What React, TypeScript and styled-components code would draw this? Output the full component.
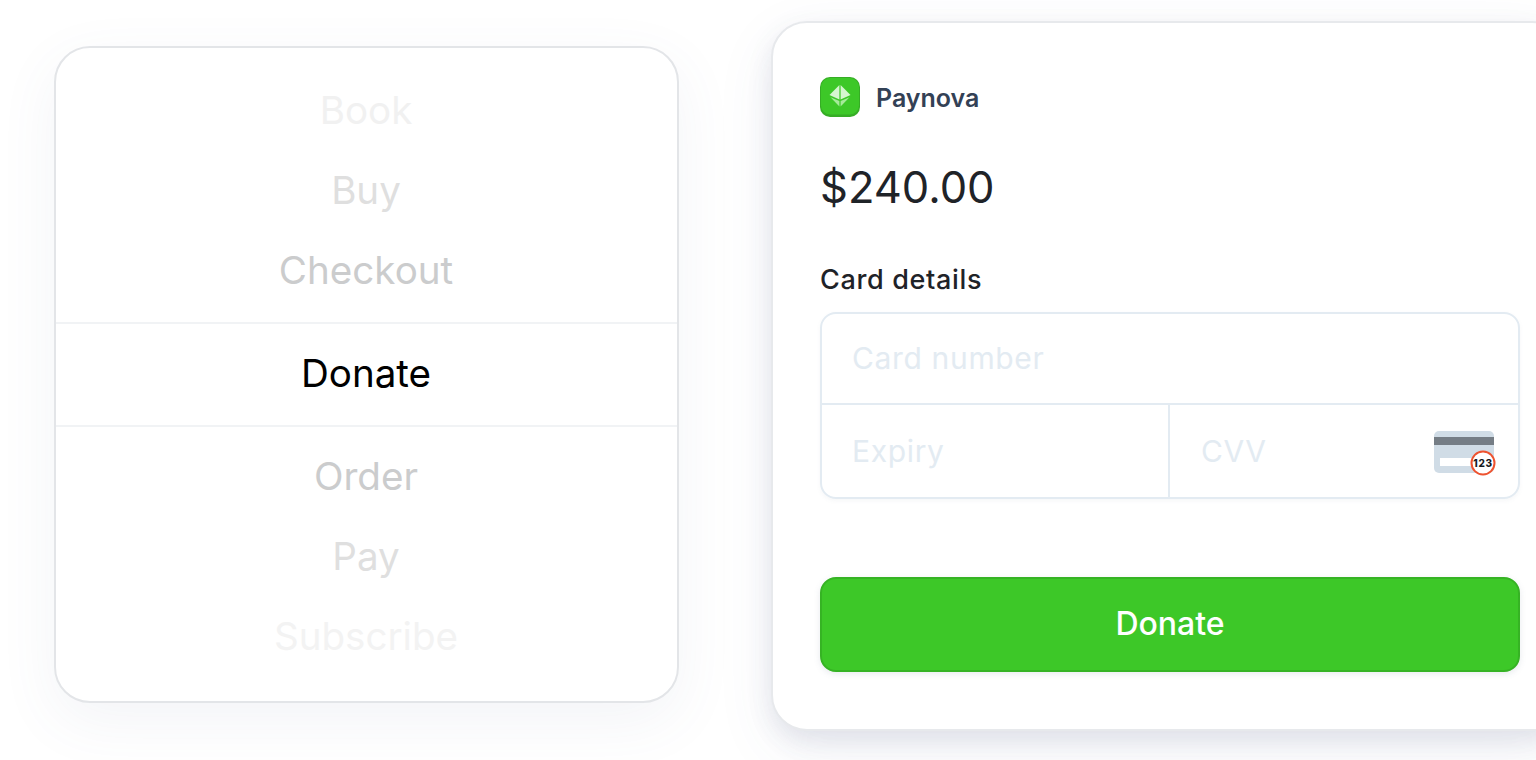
import React from "react";
import styled, { createGlobalStyle } from "styled-components";

const GlobalStyle = createGlobalStyle`
  html, body {
    margin: 0;
    width: 1536px;
    height: 760px;
    overflow: hidden;
    background: #fff;
    font-family: Inter, "Noto Sans", sans-serif;
  }
  * {
    box-sizing: border-box;
  }
`;

const Page = styled.div`
  display: flex;
  align-items: flex-start;
  width: 1536px;
  height: 760px;
  padding: 21px 0 0 54px;
  gap: 92px;
  overflow: hidden;
`;

const PickerCard = styled.div`
  flex: none;
  display: flex;
  flex-direction: column;
  width: 625px;
  height: 657px;
  margin-top: 25px;
  padding-top: 23px;
  background: #fff;
  border: 2px solid #e3e5e8;
  border-radius: 36px;
  box-shadow: 0 18px 60px rgba(80, 95, 140, 0.07);
`;

const PickerGroup = styled.div`
  display: flex;
  flex-direction: column;
`;

const PickerRow = styled.div<{ $shade: string }>`
  height: 80px;
  line-height: 78px;
  padding-right: 1px;
  text-align: center;
  font-size: 38.6px;
  color: ${(p) => p.$shade};
`;

const SelectedRow = styled.div`
  height: 105px;
  line-height: 99px;
  padding-right: 1px;
  text-align: center;
  font-size: 38.6px;
  color: #000;
  border-top: 2px solid #f1f3f5;
  border-bottom: 2px solid #f1f3f5;
  margin-top: 11px;
  margin-bottom: 10px;
`;

const CheckoutCard = styled.div`
  flex: none;
  width: 797px;
  height: 710px;
  padding: 54px 47px 0 47px;
  background: #fff;
  border: 2px solid #e7e9ec;
  border-radius: 36px;
  box-shadow: 0 10px 24px rgba(71, 85, 125, 0.12), 0 18px 60px rgba(80, 95, 140, 0.08);
`;

const Brand = styled.div`
  display: flex;
  align-items: center;
  gap: 16px;
  height: 40px;
`;

const BrandName = styled.span`
  padding-top: 2px;
  font-size: 25px;
  font-weight: 600;
  color: #334155;
`;

const Amount = styled.div`
  margin-top: 42px;
  font-size: 43.5px;
  line-height: 56px;
  font-weight: 400;
  color: #1f2328;
`;

const FieldLabel = styled.div`
  margin-top: 48px;
  font-size: 27px;
  line-height: 34px;
  font-weight: 450;
  letter-spacing: 0.65px;
  color: #1f2328;
`;

const CardForm = styled.div`
  display: grid;
  grid-template-columns: 348px 1fr;
  grid-template-rows: 91px 93px;
  width: 700px;
  height: 187px;
  margin-top: 15px;
  border: 2px solid #e3ebf2;
  border-radius: 16px;
  box-shadow: 0 2px 4px rgba(100, 116, 139, 0.06);
`;

const Field = styled.div<{ $wide?: boolean; $divided?: boolean; $inset?: number }>`
  position: relative;
  display: flex;
  align-items: center;
  padding-left: ${(p) => p.$inset ?? 30}px;
  padding-bottom: 2px;
  font-size: 30px;
  letter-spacing: 0.65px;
  color: #e3ebf2;
  grid-column: ${(p) => (p.$wide ? "1 / span 2" : "auto")};
  border-bottom: ${(p) => (p.$wide ? "2px solid #e3ebf2" : "none")};
  border-right: ${(p) => (p.$divided ? "2px solid #e3ebf2" : "none")};
`;

const CvvIcon = styled.svg`
  position: absolute;
  right: 20px;
  top: 26px;
`;

const PayButton = styled.button`
  display: block;
  width: 700px;
  height: 95px;
  margin-top: 78px;
  padding: 0 0 2px;
  font-family: inherit;
  font-size: 32px;
  font-weight: 500;
  color: #fff;
  background: #3dc828;
  border: 2px solid #36b324;
  border-radius: 16px;
  box-shadow: 0 2px 6px rgba(100, 116, 139, 0.15);
`;

function PaynovaLogo() {
  return (
    <svg width="40" height="40" viewBox="0 0 40 40">
      <rect width="40" height="40" rx="10" fill="#36ad25" />
      <rect x="1" y="1" width="38" height="36.5" rx="9" fill="#3dc828" />
      <path d="M19.4 8V22.5L9.5 18Z" fill="#d6f6d0" />
      <path d="M20.6 8V22.5L30.5 18Z" fill="#d6f6d0" />
      <path d="M10.5 20.2L19.4 24V29.5Z" fill="#a6ea9a" />
      <path d="M29.5 20.2L20.6 24V29.5Z" fill="#a6ea9a" />
    </svg>
  );
}

function CvvCard() {
  return (
    <CvvIcon width="64" height="48" viewBox="0 0 64 48">
      <rect x="0" y="0" width="60" height="42" rx="5" fill="#d0dce6" />
      <rect x="0" y="6" width="60" height="8" fill="#757d85" />
      <rect x="6" y="27" width="44" height="8" fill="#fff" />
      <circle cx="49" cy="32" r="11.5" fill="#fff" stroke="#ee5330" strokeWidth="2" />
      <text x="49" y="35.5" textAnchor="middle" fontSize="10" fontWeight="800" fontFamily="Inter, sans-serif" fill="#15181c">
        123
      </text>
    </CvvIcon>
  );
}

export default function App() {
  return (
    <>
      <GlobalStyle />
      <Page>
        <PickerCard>
          <PickerGroup>
            <PickerRow $shade="#f1f1f1">Book</PickerRow>
            <PickerRow $shade="#dfdfdf">Buy</PickerRow>
            <PickerRow $shade="#cbcccd">Checkout</PickerRow>
          </PickerGroup>
          <SelectedRow>Donate</SelectedRow>
          <PickerGroup>
            <PickerRow $shade="#cbcccd">Order</PickerRow>
            <PickerRow $shade="#dfdfdf">Pay</PickerRow>
            <PickerRow $shade="#f3f3f3">Subscribe</PickerRow>
          </PickerGroup>
        </PickerCard>
        <CheckoutCard>
          <Brand>
            <PaynovaLogo />
            <BrandName>Paynova</BrandName>
          </Brand>
          <Amount>$240.00</Amount>
          <FieldLabel>Card details</FieldLabel>
          <CardForm>
            <Field $wide>Card number</Field>
            <Field $divided>Expiry</Field>
            <Field $inset={31}>
              CVV
              <CvvCard />
            </Field>
          </CardForm>
          <PayButton>Donate</PayButton>
        </CheckoutCard>
      </Page>
    </>
  );
}
